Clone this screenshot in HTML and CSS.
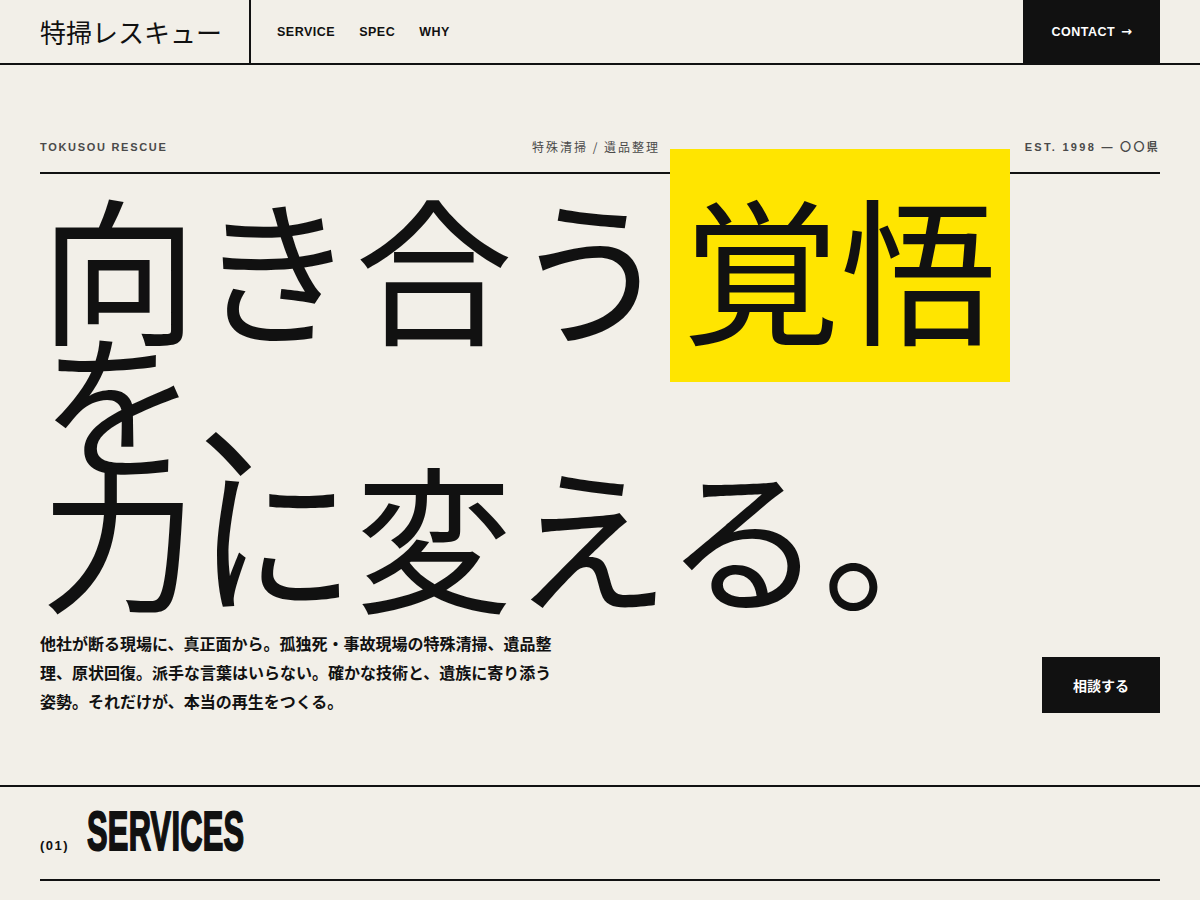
FILE: index.html
```html
<!DOCTYPE html>
<html lang="ja">
<head>
<meta charset="utf-8">
<title>特掃レスキュー</title>
<link rel="stylesheet" href="styles.css">
</head>
<body>
<header class="site-header">
  <div class="logo">特掃レスキュー</div>
  <nav class="nav">
    <a href="#service">SERVICE</a>
    <a href="#spec">SPEC</a>
    <a href="#why">WHY</a>
  </nav>
  <a class="contact" href="#contact">CONTACT <span class="arrow">→</span></a>
</header>

<section class="hero">
  <div class="meta">
    <span class="meta-item">TOKUSOU RESCUE</span>
    <span class="meta-item meta-jp">特殊清掃 / 遺品整理</span>
    <span class="meta-item meta-est">EST. 1998 — 〇〇県</span>
  </div>
  <h1 class="headline">向き合う<span class="mark">覚悟</span>を、<br>力に変える。</h1>
  <div class="hero-foot">
    <p class="lead">他社が断る現場に、真正面から。孤独死・事故現場の特殊清掃、遺品整理、原状回復。派手な言葉はいらない。確かな技術と、遺族に寄り添う姿勢。それだけが、本当の再生をつくる。</p>
    <a class="cta" href="#contact">相談する</a>
  </div>
</section>

<section class="services" id="service">
  <div class="section-head">
    <span class="num">(01)</span>
    <h2 class="section-title">SERVICES</h2>
  </div>
</section>
</body>
</html>
```

FILE: styles.css
```css
* { box-sizing: border-box; }

body {
  margin: 0;
  background: #F2EFE8;
  color: #111;
  font-family: "Liberation Sans", "Noto Sans CJK JP", sans-serif;
}

a { color: inherit; text-decoration: none; }

.site-header {
  display: flex;
  align-items: stretch;
  height: 65px;
  border-bottom: 2px solid #111;
}

.logo {
  display: flex;
  align-items: center;
  padding: 0 27px 0 40px;
  border-right: 2px solid #111;
  font-family: "Noto Sans CJK JP", sans-serif;
  font-size: 26px;
  font-weight: 400;
}

.nav {
  display: flex;
  align-items: center;
  gap: 24px;
  padding-left: 26px;
  font-size: 12.5px;
  font-weight: 700;
  letter-spacing: 0.5px;
}

.contact {
  margin-left: auto;
  margin-right: 40px;
  display: flex;
  align-items: center;
  gap: 6px;
  padding: 0 28px;
  background: #111;
  color: #fff;
  font-size: 12.5px;
  font-weight: 700;
  letter-spacing: 0.5px;
}

.arrow {
  font-family: "DejaVu Sans", sans-serif;
  font-size: 13px;
  font-weight: 700;
  letter-spacing: 0;
}

.hero {
  padding: 74px 40px 69px;
  border-bottom: 2px solid #111;
}

.meta {
  display: flex;
  justify-content: space-between;
  padding-bottom: 17px;
  border-bottom: 2px solid #111;
  font-size: 11px;
  line-height: 16px;
  letter-spacing: 1.7px;
  color: #4a4a4a;
  font-weight: 700;
}

.meta-jp {
  font-family: "Noto Sans CJK JP", sans-serif;
  font-weight: 400;
  font-size: 12px;
  letter-spacing: 2px;
}

.meta-est {
  letter-spacing: 2.3px;
}

.headline {
  margin: 23px 0 0;
  font-family: "Noto Sans CJK JP", sans-serif;
  font-weight: 400;
  font-size: 157.5px;
  line-height: 134px;
  letter-spacing: 0;
}

.mark {
  background: #FFE500;
  padding: 1px 12.5px 4px;
}

.hero-foot {
  display: flex;
  justify-content: space-between;
  align-items: flex-end;
  margin-top: 30px;
}

.lead {
  margin: 0;
  width: 515px;
  font-family: "Noto Sans CJK JP", sans-serif;
  font-size: 16px;
  line-height: 29px;
  font-weight: 700;
}

.cta {
  display: block;
  padding: 18px 31px;
  margin-bottom: 3px;
  background: #111;
  color: #fff;
  font-family: "Noto Sans CJK JP", sans-serif;
  font-size: 14px;
  line-height: 20px;
  font-weight: 700;
}

.services {
  padding: 0 40px;
}

.section-head {
  display: flex;
  align-items: baseline;
  gap: 18px;
  padding: 15px 0 20px;
  border-bottom: 2px solid #111;
}

.num {
  font-size: 13px;
  font-weight: 700;
  letter-spacing: 1.5px;
}

.section-title {
  margin: 0;
  display: inline-block;
  font-size: 56px;
  line-height: 57px;
  font-weight: 700;
  letter-spacing: 0.5px;
  transform: scaleX(0.55);
  transform-origin: left center;
  -webkit-text-stroke: 2px #111;
}
```
